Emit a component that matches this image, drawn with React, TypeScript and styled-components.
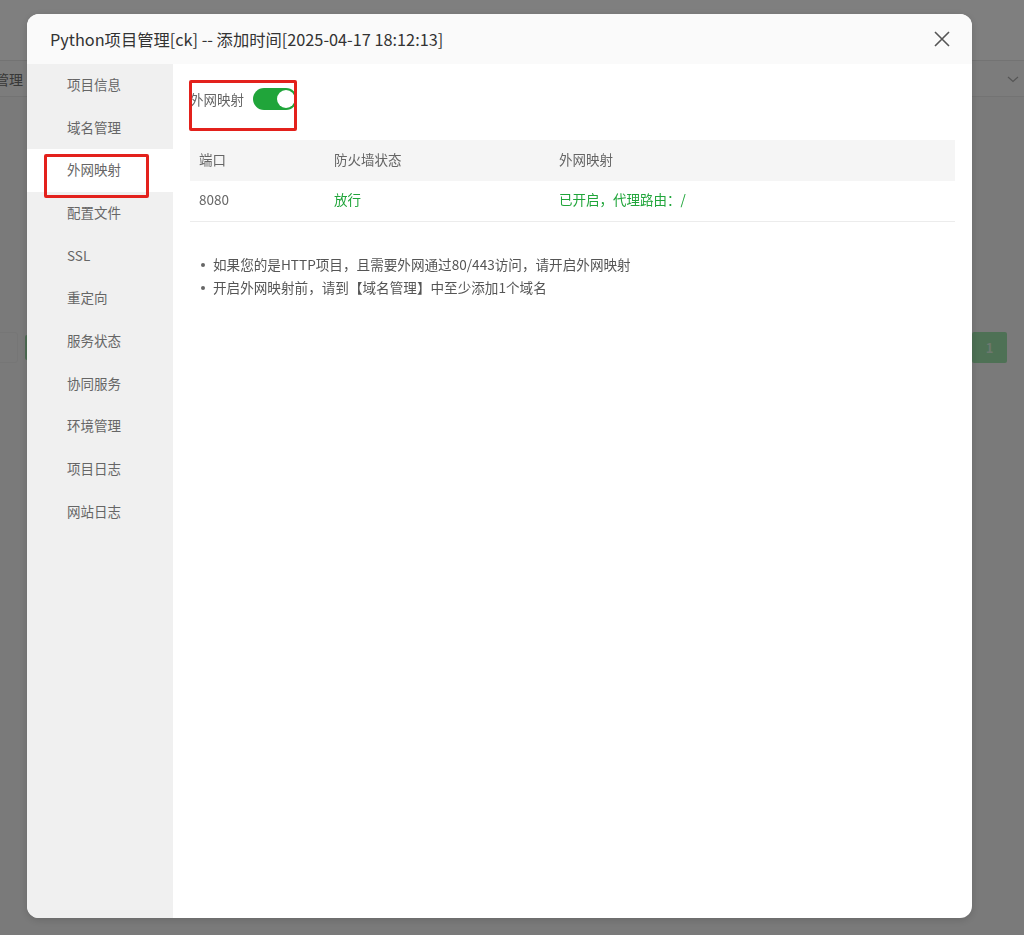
import React, { useState } from 'react';
import styled, { createGlobalStyle } from 'styled-components';

const GlobalStyle = createGlobalStyle`
  html, body {
    margin: 0;
    padding: 0;
    background: #f4f4f4;
    font-family: 'Noto Sans CJK SC', 'Noto Sans', 'Liberation Sans', sans-serif;
  }
  * { box-sizing: border-box; }
`;

const GREEN = '#20a53a';

// ---- page behind the dialog ----
const Page = styled.div`
  width: 1024px;
  height: 935px;
  overflow: hidden;
  background: #f4f4f4;
`;

const TopBar = styled.div`
  height: 61px;
  background: #fff;
  border-bottom: 1px solid #e6e6e6;
`;

const TabRow = styled.div`
  height: 36px;
  background: #f8f8f8;
  border-bottom: 1px solid #e6e6e6;
  display: flex;
  align-items: center;
  justify-content: space-between;
`;

const TabLabel = styled.span`
  margin-left: -5px;
  font-size: 14px;
  color: #707070;
`;

const Chevron = styled.span`
  margin-right: 4px;
  color: #aaa;
  display: flex;
`;

const ToolRow = styled.div`
  margin-top: 235px;
  display: flex;
  align-items: center;
  justify-content: space-between;
  height: 31px;
`;

const ToolLeft = styled.div`
  display: flex;
  align-items: center;
  gap: 7px;
`;

const FakeSelect = styled.div`
  width: 60px;
  height: 31px;
  margin-left: -42px;
  border: 1px solid #ececec;
  border-radius: 3px;
  background: #f4f4f4;
`;

const FakeButton = styled.div`
  width: 60px;
  height: 25px;
  background: #9ad8a6;
  border-radius: 2px;
`;

const PageButton = styled.div`
  width: 35px;
  height: 31px;
  margin-right: 17px;
  border-radius: 2px;
  background: #9ce2aa;
  color: #d8f0dc;
  font-size: 13px;
  font-weight: 700;
  display: flex;
  align-items: center;
  justify-content: center;
`;

// ---- dialog ----
const Overlay = styled.div`
  position: fixed;
  inset: 0;
  background: rgba(0, 0, 0, 0.5);
`;

const Dialog = styled.div`
  margin: 14px 0 0 27px;
  width: 945px;
  height: 904px;
  background: #fff;
  border-radius: 12px;
  overflow: hidden;
  display: flex;
  flex-direction: column;
  box-shadow: 0 2px 8px rgba(0, 0, 0, 0.15);
`;

const Header = styled.div`
  height: 50px;
  flex: none;
  background: #fafafa;
  display: flex;
  align-items: center;
  justify-content: space-between;
  padding: 0 20px 0 23px;
`;

const Title = styled.h1`
  margin: 0;
  font-size: 16.3px;
  font-weight: 400;
  color: #333;
`;

const CloseButton = styled.button`
  border: 0;
  background: none;
  padding: 0;
  width: 20px;
  height: 20px;
  display: flex;
  align-items: center;
  justify-content: center;
  cursor: pointer;
`;

const Body = styled.div`
  flex: 1;
  display: grid;
  grid-template-columns: 146px 1fr;
`;

const SideNav = styled.ul`
  margin: 0;
  padding: 0;
  list-style: none;
  background: #f0f0f0;
`;

const NavItem = styled.li<{ $active?: boolean }>`
  position: relative;
  height: 42.7px;
  padding: 0 0 3px 40px;
  display: flex;
  align-items: center;
  font-size: 13.5px;
  color: #666;
  background: ${(p) => (p.$active ? '#fff' : 'transparent')};
  cursor: pointer;
`;

// red annotation rectangle drawn over the screenshot
const Mark = styled.span<{ $l: number; $t: number; $w: number; $h: number }>`
  position: absolute;
  left: ${(p) => p.$l}px;
  top: ${(p) => p.$t}px;
  width: ${(p) => p.$w}px;
  height: ${(p) => p.$h}px;
  border: 3px solid #e3211c;
  border-radius: 2px;
  pointer-events: none;
  z-index: 2;
`;

const Content = styled.div`
  position: relative;
  padding: 24px 17px 0 17px;
`;

const SwitchRow = styled.div`
  display: flex;
  align-items: center;
  gap: 9px;
  height: 22px;
  font-size: 13.5px;
  color: #666;
`;

const Switch = styled.button<{ $on: boolean }>`
  position: relative;
  width: 44px;
  height: 22px;
  border: 0;
  padding: 0;
  border-radius: 11px;
  background: ${(p) => (p.$on ? GREEN : '#ccc')};
  cursor: pointer;

  &::after {
    content: '';
    position: absolute;
    top: 2px;
    left: ${(p) => (p.$on ? '24px' : '2px')};
    width: 18px;
    height: 18px;
    border-radius: 50%;
    background: #fff;
  }
`;

const Table = styled.table`
  margin-top: 30px;
  width: 100%;
  border-collapse: collapse;
  font-size: 13.5px;
`;

const Th = styled.th<{ $w?: number }>`
  height: 41px;
  padding: 0 9px 3px;
  text-align: left;
  font-weight: 400;
  color: #666;
  background: #f5f5f5;
  width: ${(p) => (p.$w ? `${p.$w}px` : 'auto')};
`;

const Td = styled.td<{ $green?: boolean }>`
  height: 40px;
  padding: 0 9px 3px;
  color: ${(p) => (p.$green ? GREEN : '#666')};
  border-bottom: 1px solid #ececec;
`;

const Notes = styled.ul`
  margin: 31px 0 0 0;
  padding: 0 0 0 11px;
  list-style: none;
  font-size: 13.6px;
  color: #555;
`;

const Note = styled.li`
  position: relative;
  padding-left: 12px;
  line-height: 23px;

  &::before {
    content: '';
    position: absolute;
    left: 0;
    top: 10px;
    width: 4px;
    height: 4px;
    border-radius: 50%;
    background: #666;
  }
`;

const navItems = [
  '项目信息',
  '域名管理',
  '外网映射',
  '配置文件',
  'SSL',
  '重定向',
  '服务状态',
  '协同服务',
  '环境管理',
  '项目日志',
  '网站日志',
];

export default function App() {
  const [active, setActive] = useState('外网映射');
  const [mapped, setMapped] = useState(true);

  return (
    <>
      <GlobalStyle />
      <Page>
        <TopBar />
        <TabRow>
          <TabLabel>管理</TabLabel>
          <Chevron>
            <svg width="14" height="14" viewBox="0 0 14 14" fill="none">
              <path d="M2 5l5 4.5L12 5" stroke="currentColor" strokeWidth="1.2" />
            </svg>
          </Chevron>
        </TabRow>
        <ToolRow>
          <ToolLeft>
            <FakeSelect />
            <FakeButton />
          </ToolLeft>
          <PageButton>1</PageButton>
        </ToolRow>
      </Page>

      <Overlay>
        <Dialog>
          <Header>
            <Title>Python项目管理[ck] -- 添加时间[2025-04-17 18:12:13]</Title>
            <CloseButton aria-label="关闭">
              <svg width="16" height="16" viewBox="0 0 16 16" fill="none">
                <path d="M1 1l14 14M15 1L1 15" stroke="#555" strokeWidth="1.6" />
              </svg>
            </CloseButton>
          </Header>
          <Body>
            <SideNav>
              {navItems.map((item) => (
                <NavItem key={item} $active={item === active} onClick={() => setActive(item)}>
                  {item}
                  {item === '外网映射' && <Mark $l={17} $t={5} $w={105} $h={44} />}
                </NavItem>
              ))}
            </SideNav>
            <Content>
              <Mark $l={16} $t={16} $w={108} $h={51} />
              <SwitchRow>
                外网映射
                <Switch $on={mapped} onClick={() => setMapped((v) => !v)} aria-label="外网映射" />
              </SwitchRow>
              <Table>
                <thead>
                  <tr>
                    <Th $w={135}>端口</Th>
                    <Th $w={225}>防火墙状态</Th>
                    <Th>外网映射</Th>
                  </tr>
                </thead>
                <tbody>
                  <tr>
                    <Td>8080</Td>
                    <Td $green>放行</Td>
                    <Td $green>已开启，代理路由：/</Td>
                  </tr>
                </tbody>
              </Table>
              <Notes>
                <Note>如果您的是HTTP项目，且需要外网通过80/443访问，请开启外网映射</Note>
                <Note>开启外网映射前，请到【域名管理】中至少添加1个域名</Note>
              </Notes>
            </Content>
          </Body>
        </Dialog>
      </Overlay>
    </>
  );
}
